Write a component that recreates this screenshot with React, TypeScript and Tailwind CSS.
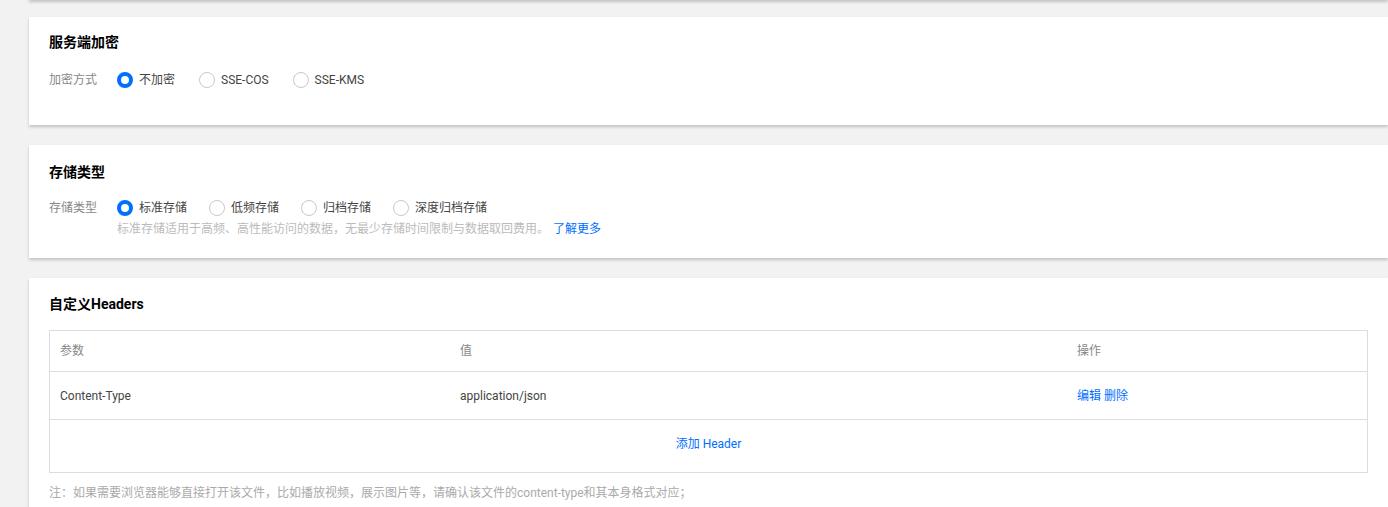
import React from "react";

const FONT = { fontFamily: 'Roboto, "Noto Sans CJK SC", "Noto Sans", sans-serif' };

function Radio({ checked, label, mr = "mr-[22px]" }: { checked?: boolean; label: string; mr?: string }) {
  return (
    <label className={"flex items-center h-5 cursor-pointer " + mr}>
      {checked ? (
        <span className="w-4 h-4 rounded-full border-[4px] border-[#006eff] bg-white box-border" />
      ) : (
        <span className="w-4 h-4 rounded-full border border-[#c8c8c8] bg-white box-border" />
      )}
      <span className="ml-[6px] text-[12px] leading-5 text-[#444]">{label}</span>
    </label>
  );
}

function Card({ children, className = "" }: { children: React.ReactNode; className?: string }) {
  return (
    <div className={"ml-[29px] bg-white shadow-[0_2px_3px_0_rgba(0,0,0,0.2)] px-5 " + className}>{children}</div>
  );
}

export default function App() {
  return (
    <div className="min-h-[507px] bg-[#f2f2f2] flex flex-col overflow-hidden" style={FONT}>
      <div className="h-5 -mt-5 ml-[29px] bg-white shadow-[0_2px_3px_0_rgba(0,0,0,0.2)]" />

      <Card className="mt-[17px] pt-[15px] pb-[35px]">
        <h3 className="text-[14px] leading-5 font-bold text-black">服务端加密</h3>
        <div className="mt-[18px] flex items-center">
          <div className="w-[68px] text-[12px] leading-5 text-[#888]">加密方式</div>
          <div className="flex items-center">
            <Radio checked label="不加密" mr="mr-[24px]" />
            <Radio label="SSE-COS" mr="mr-[24px]" />
            <Radio label="SSE-KMS" mr="mr-[24px]" />
          </div>
        </div>
      </Card>

      <Card className="mt-5 pt-[17px] pb-[20px]">
        <h3 className="text-[14px] leading-5 font-bold text-black">存储类型</h3>
        <div className="mt-4 flex items-start">
          <div className="w-[68px] text-[12px] leading-5 text-[#888]">存储类型</div>
          <div className="flex flex-col">
            <div className="flex items-center">
              <Radio checked label="标准存储" />
              <Radio label="低频存储" />
              <Radio label="归档存储" />
              <Radio label="深度归档存储" />
            </div>
            <div className="mt-[2px] text-[12px] leading-[18px] text-[#bbb]">
              标准存储适用于高频、高性能访问的数据，无最少存储时间限制与数据取回费用。
              <a className="ml-1 text-[#006eff]" href="#">了解更多</a>
            </div>
          </div>
        </div>
      </Card>

      <Card className="mt-5 pt-4 pb-6">
        <h3 className="text-[14px] leading-5 font-bold text-black">自定义Headers</h3>
        <div className="mt-4 border border-[#dddddd] text-[12px]">
          <div className="flex items-center h-[41px] border-b border-[#dddddd] text-[#888]">
            <div className="w-[400px] px-[10px]">参数</div>
            <div className="w-[617px] px-[10px]">值</div>
            <div className="flex-1 px-[10px]">操作</div>
          </div>
          <div className="flex items-center h-[48px] border-b border-[#dddddd] text-[#444]">
            <div className="w-[400px] px-[10px]">Content-Type</div>
            <div className="w-[617px] px-[10px]">application/json</div>
            <div className="flex-1 px-[10px] text-[#006eff]">
              <a href="#">编辑</a> <a href="#">删除</a>
            </div>
          </div>
          <div className="flex items-center justify-center h-[52px] pb-1">
            <a href="#" className="text-[#006eff]">添加 Header</a>
          </div>
        </div>
        <p className="mt-[11px] text-[12px] leading-[18px] text-[#aaa]">
          注：如果需要浏览器能够直接打开该文件，比如播放视频，展示图片等，请确认该文件的content-type和其本身格式对应；
        </p>
      </Card>
    </div>
  );
}
